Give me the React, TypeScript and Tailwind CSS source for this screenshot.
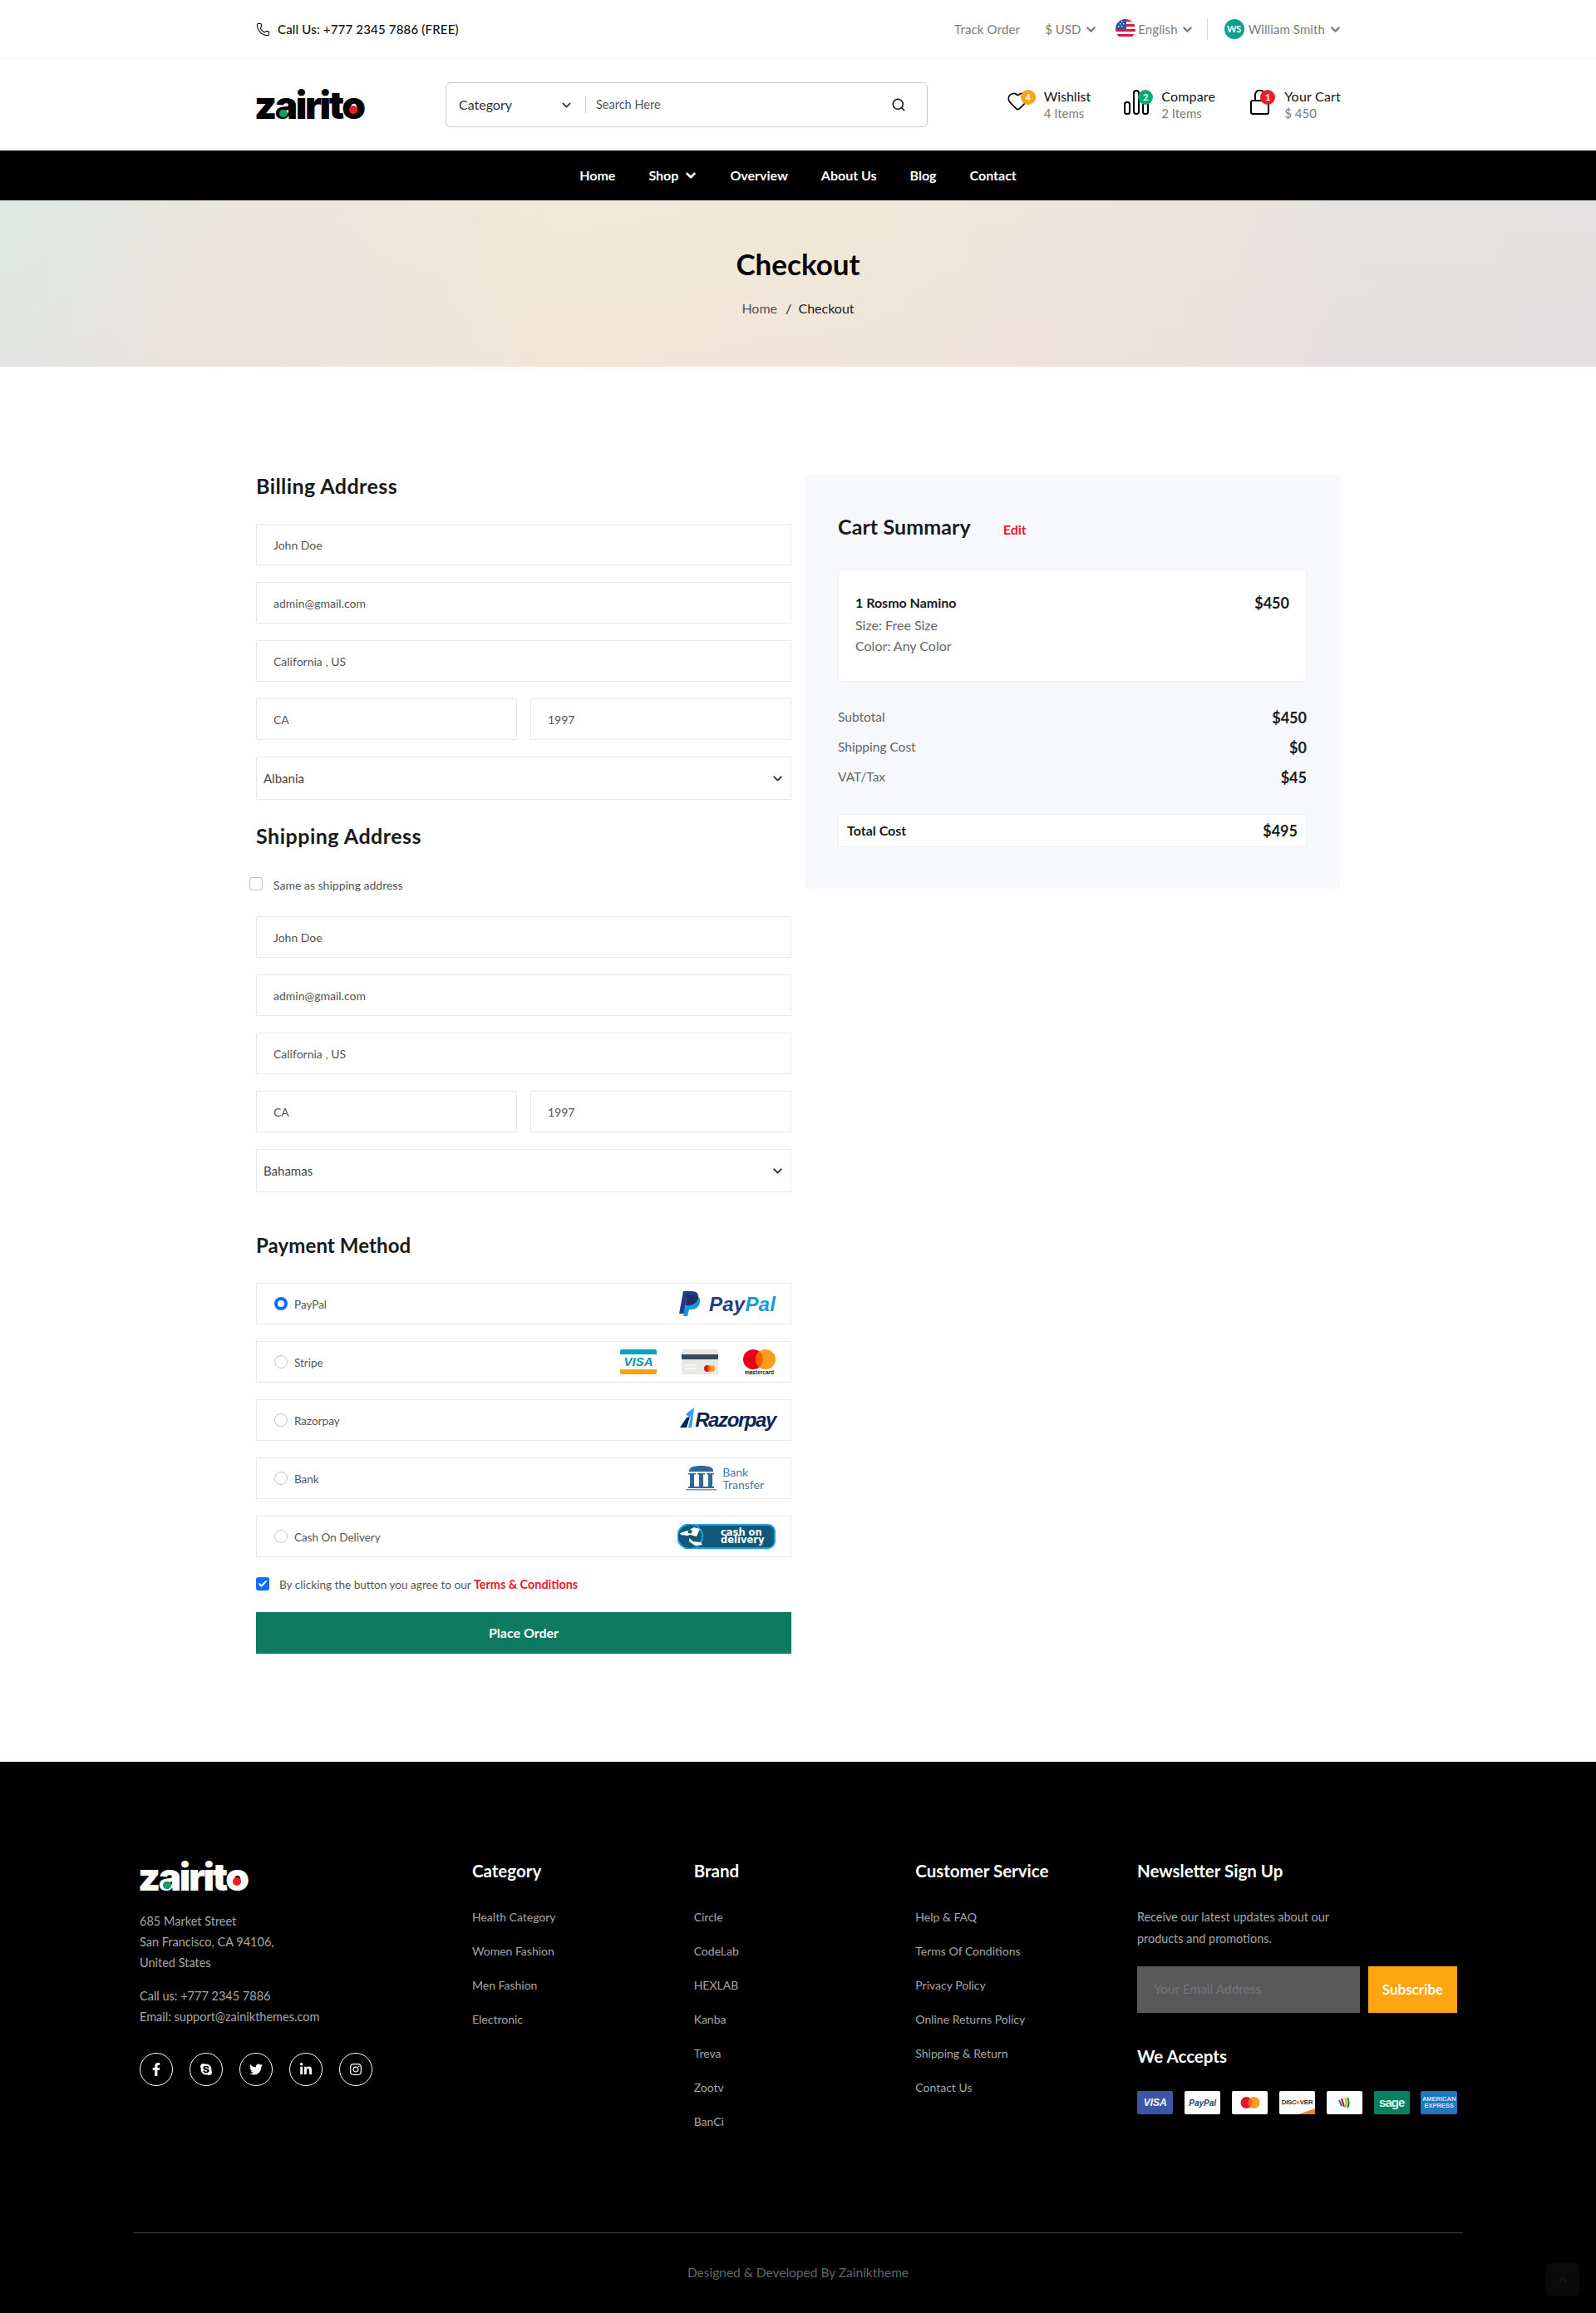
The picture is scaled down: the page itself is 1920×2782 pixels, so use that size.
import React from "react";
import { Phone, ChevronDown, Search, Heart, Check } from "lucide-react";
import { FaFacebookF, FaSkype, FaTwitter, FaLinkedinIn, FaInstagram } from "react-icons/fa";

function Logo({ white }: { white?: boolean }) {
  return (
    <div className={`relative -ml-[2px] h-[42px] w-[133px] leading-[42px] ${white ? "text-white" : "text-black"}`}>
      <span className="font-['Inter',sans-serif] text-[46px] font-black tracking-[-2.4px]">zairito</span>
      <span className="absolute left-[30px] top-[27px] h-[9px] w-[10px] rounded-full bg-[#0f9d6b]" />
      <span className="absolute left-[114px] top-[22px] h-[10px] w-[10px] rounded-full bg-[#ee1c25]" />
    </div>
  );
}

function Chev() {
  return <ChevronDown className="-mx-[1.5px]" size={17} strokeWidth={3} />;
}

function Flag() {
  return (
    <svg width="24" height="24" viewBox="0 0 24 24">
      <defs>
        <clipPath id="flagclip">
          <circle cx="12" cy="12" r="12" />
        </clipPath>
      </defs>
      <g clipPath="url(#flagclip)">
        <rect width="24" height="24" fill="#fff" />
        <rect y="0" width="24" height="3" fill="#e3173e" />
        <rect y="6" width="24" height="3" fill="#e3173e" />
        <rect y="12" width="24" height="3" fill="#e3173e" />
        <rect y="18" width="24" height="3" fill="#e3173e" />
        <rect width="13" height="12" fill="#2a52a8" />
        <g fill="#fff">
          <rect x="3" y="2" width="1.4" height="1.4" />
          <rect x="7" y="2" width="1.4" height="1.4" />
          <rect x="5" y="5" width="1.4" height="1.4" />
          <rect x="9" y="5" width="1.4" height="1.4" />
          <rect x="3" y="8" width="1.4" height="1.4" />
          <rect x="7" y="8" width="1.4" height="1.4" />
        </g>
      </g>
    </svg>
  );
}

function TopBar() {
  return (
    <div className="h-[71px] border-b border-[#eeeeee]">
      <div className="mx-auto flex h-[70px] w-[1304px] items-center justify-between">
        <div className="flex items-center gap-[9px] text-[15px] font-medium tracking-[0.18px] text-[#111]">
          <Phone size={17} strokeWidth={1.6} />
          <span>Call Us: +777 2345 7886 (FREE)</span>
        </div>
        <div className="-mr-px flex items-center text-[15px] text-[#7b7b7b]">
          <span className="mr-[30px] tracking-[0.15px]">Track Order</span>
          <span className="mr-[23px] flex items-center gap-[5px]">
            $ USD <Chev />
          </span>
          <span className="flex items-center gap-[3px]">
            <Flag />
            <span className="tracking-[0.1px]">English</span> <span className="ml-[2px] flex"><Chev /></span>
          </span>
          <span className="ml-[16px] mr-[20px] h-[26px] w-px bg-[#dddddd]" />
          <span className="flex items-center gap-[5px]">
            <span className="flex h-6 w-6 items-center justify-center rounded-full bg-[#0ea18a] text-[11px] font-bold text-white">WS</span>
            <span className="tracking-[0.1px]">William Smith</span> <Chev />
          </span>
        </div>
      </div>
    </div>
  );
}

function Badge({ n, color, left = "left-[17px]" }: { n: string; color: string; left?: string }) {
  return (
    <span className={`absolute ${left} top-0 flex h-[18px] w-[18px] items-center justify-center rounded-full text-[11px] font-bold text-white ${color}`}>{n}</span>
  );
}

function HeaderItem({ icon, title, sub, box, titleCls = "" }: { icon: React.ReactNode; title: string; sub: string; box: string; titleCls?: string }) {
  return (
    <div className="flex items-center">
      <div className={`relative -mt-[6px] h-[30px] ${box}`}>{icon}</div>
      <div>
        <div className={`text-[16px] leading-5 text-[#111] ${titleCls}`}>{title}</div>
        <div className="text-[15px] leading-5 text-[#7b7b7b]">{sub}</div>
      </div>
    </div>
  );
}

function MiddleHeader() {
  return (
    <div className="mx-auto flex h-[110px] w-[1304px] items-center justify-between">
      <Logo />
      <div className="ml-[97px] flex h-[54px] w-[580px] items-center rounded-md border border-[#c8c8c8] pl-[15px] pr-[25px]">
        <span className="w-[122px] text-[16px] text-[#333]">Category</span>
        <ChevronDown size={17} strokeWidth={2.4} className="-mx-[1.5px] text-[#333]" />
        <span className="ml-[16px] h-5 w-px bg-[#cccccc]" />
        <span className="ml-3 flex-1 text-[14.5px] text-[#555]">Search Here</span>
        <Search size={18} strokeWidth={2} className="text-[#111]" />
      </div>
      <div className="-mr-px ml-auto flex items-center gap-[38px]">
        <HeaderItem
          box="w-[45px]"
          title="Wishlist"
          sub="4 Items"
          icon={
            <>
              <Heart size={27} strokeWidth={1.4} className="text-black" />
              <Badge n="4" color="bg-[#fea510]" />
            </>
          }
        />
        <div className="ml-[2px]">
          <HeaderItem
            box="w-[45px]"
            title="Compare"
            titleCls="tracking-[0.2px]"
            sub="2 Items"
            icon={
              <>
                <svg width="30" height="30" viewBox="0 0 30 30" fill="none" stroke="#000" strokeWidth="2">
                  <rect x="1" y="15" width="6" height="14" rx="2.5" />
                  <rect x="12" y="1" width="6" height="28" rx="3" />
                  <rect x="23" y="8" width="6" height="21" rx="2.5" />
                </svg>
                <Badge n="2" color="bg-[#0ba876]" />
              </>
            }
          />
        </div>
        <div className="ml-[4px]">
          <HeaderItem
            box="w-[41px]"
            title="Your Cart"
            titleCls="tracking-[0.2px]"
            sub="$ 450"
            icon={
              <>
                <svg width="24" height="30" viewBox="0 0 24 30" fill="none" stroke="#000" strokeWidth="2">
                  <rect x="1" y="13" width="21" height="16" rx="2" />
                  <path d="M6 13V6a5 5 0 0 1 11 0v7" />
                </svg>
                <Badge n="1" color="bg-[#ee1c2e]" left="left-[12px]" />
              </>
            }
          />
        </div>
      </div>
    </div>
  );
}

function Nav() {
  return (
    <nav className="flex h-[60px] items-center justify-center gap-10 bg-black text-[16px] font-bold text-white">
      <span>Home</span>
      <span className="flex items-center gap-[6px]">
        Shop <ChevronDown size={18} strokeWidth={3.4} className="-mr-[2px]" />
      </span>
      <span>Overview</span>
      <span>About Us</span>
      <span>Blog</span>
      <span>Contact</span>
    </nav>
  );
}

function Hero() {
  return (
    <div className="flex h-[200px] flex-col items-center bg-[linear-gradient(to_bottom,rgba(255,255,255,0),rgba(236,205,215,0.12)),linear-gradient(97deg,#dfe8e4_0%,#e9e6e0_12%,#f2e9d8_35%,#f1e8da_55%,#eee4dd_70%,#e4e3e2_85%,#e4e2e2_100%)]">
      <h1 className="mt-[52px] text-[35px] font-bold leading-[48px] text-black">Checkout</h1>
      <div className="mt-[18px] flex gap-[10px] text-[16px] leading-6">
        <span className="text-[#555]">Home</span>
        <span className="text-[#222]">/&nbsp;&nbsp;Checkout</span>
      </div>
    </div>
  );
}

function Field({ ph }: { ph: string }) {
  return (
    <input
      placeholder={ph}
      className="h-[50px] w-full border border-[#e9e9e9] bg-white px-5 text-sm outline-none placeholder:text-[#555]"
    />
  );
}

function SelectBox({ value }: { value: string }) {
  return (
    <div className="relative">
      <select defaultValue={value} className="h-[52px] w-full appearance-none border border-[#e9e9e9] bg-white px-2 text-[15px] text-[#444] outline-none">
        <option>{value}</option>
      </select>
      <ChevronDown size={17} strokeWidth={2.8} className="pointer-events-none absolute right-[8px] top-[18px] text-[#333]" />
    </div>
  );
}

function AddressFields({ country }: { country: string }) {
  return (
    <div className="flex flex-col gap-5">
      <Field ph="John Doe" />
      <Field ph="admin@gmail.com" />
      <Field ph="California , US" />
      <div className="grid grid-cols-2 gap-4">
        <Field ph="CA" />
        <Field ph="1997" />
      </div>
      <SelectBox value={country} />
    </div>
  );
}

function PayPalLogo() {
  return (
    <div className="flex h-[30px] items-center gap-[10px]">
      <svg width="26" height="30" viewBox="0 0 26 30">
        <path d="M5 0h10c6 0 9 3 8 8-1 6-5 9-11 9H8L6 27H0z" fill="#253b80" />
        <path d="M9 5h9c5 0 8 3 7 8-1 6-5 9-10 9h-3l-2 8H5z" fill="#179bd7" />
        <path d="M9 5h9c2 0 4 .5 5 1.6C23 12 19 17 12 17H8z" fill="#222d65" />
      </svg>
      <span className="mt-[2px] font-['Liberation_Sans',sans-serif] text-[24px] font-bold italic leading-none tracking-[0.2px]">
        <span className="text-[#253b80]">Pay</span>
        <span className="text-[#179bd7]">Pal</span>
      </span>
    </div>
  );
}

function CardIcons() {
  return (
    <div className="flex h-[30px] items-center gap-[30px]">
      <div className="relative flex h-[30px] w-[44px] flex-col overflow-hidden rounded-[2px] bg-white">
        <span className="h-[6px] bg-[#0ca0c4]" />
        <span className="flex-1 text-center font-['Liberation_Sans',sans-serif] text-[15px] font-bold italic leading-[17px] text-[#0f93ad]">VISA</span>
        <span className="h-[6px] bg-[#f9a01b]" />
      </div>
      <svg width="44" height="30" viewBox="0 0 44 30">
        <rect width="44" height="30" rx="2" fill="#e9e9e4" />
        <rect y="6" width="44" height="6" fill="#34495e" />
        <rect x="4" y="18" width="14" height="2" fill="#f6f6f3" />
        <rect x="4" y="22" width="14" height="2" fill="#f6f6f3" />
        <circle cx="31" cy="23" r="4" fill="#e8112d" />
        <circle cx="36" cy="23" r="4" fill="#f79e1b" />
        <path d="M33.5 19.9a4 4 0 0 1 0 6.2 4 4 0 0 1 0-6.2z" fill="#ff5f00" />
      </svg>
      <div className="flex w-[39px] flex-col items-center">
        <svg width="39" height="24" viewBox="0 0 39 24">
          <circle cx="12" cy="12" r="12" fill="#eb001b" />
          <circle cx="27" cy="12" r="12" fill="#f79e1b" />
          <path d="M19.5 2.6a12 12 0 0 1 0 18.8 12 12 0 0 1 0-18.8z" fill="#ff5f00" />
        </svg>
        <span className="font-['Liberation_Sans',sans-serif] text-[6.5px] font-bold leading-[7px] text-[#222]">mastercard</span>
      </div>
    </div>
  );
}

function RazorpayLogo() {
  return (
    <div className="flex h-[30px] items-center">
      <svg width="18" height="30" viewBox="0 0 18 30">
        <path d="M0 24 8 12l4-1-4 13z" fill="#072654" />
        <path d="M17 0 15 3l-5 21h4z" fill="#3395ff" />
        <path d="M7 8l10-8-5 12z" fill="#3395ff" />
      </svg>
      <span className="font-['Liberation_Sans',sans-serif] text-[24px] font-bold italic leading-none tracking-[-1.4px] text-[#072654]">Razorpay</span>
    </div>
  );
}

function BankLogo() {
  return (
    <div className="mr-[14px] flex h-[30px] items-center gap-[7px]">
      <svg width="37" height="30" viewBox="0 0 37 30" fill="#336699">
        <path d="M4 6c0-4 5-6 14.500-6S33 2 33 6v1H4z" />
        <rect x="5" y="10" width="5" height="15" />
        <rect x="16" y="10" width="5" height="15" />
        <rect x="27" y="10" width="5" height="15" />
        <rect x="3" y="9" width="9" height="1.500" />
        <rect x="14" y="9" width="9" height="1.500" />
        <rect x="25" y="9" width="9" height="1.500" />
        <rect x="3" y="25" width="31" height="2" />
        <rect x="0" y="28" width="37" height="1.500" fill="#6f96bf" />
      </svg>
      <div className="text-[14px] leading-[15px] text-[#4a76a8]">
        <div>Bank</div>
        <div>Transfer</div>
      </div>
    </div>
  );
}

function CodLogo() {
  return (
    <div className="relative flex h-[30px] w-[118px] items-center rounded-l-[15px] rounded-r-[9px] border-2 border-[#1ca4dc] bg-[#12587a]">
      <svg width="44" height="30" viewBox="0 0 44 30" className="absolute left-[-2px] top-[-2px]">
        <circle cx="15" cy="15" r="14" fill="#12587a" />
        <circle cx="15" cy="15" r="15" fill="none" stroke="#1ca4dc" strokeWidth="2" />
        <path d="M3 11l9-3 8-4 7 2-4 9-8-2-3 1-8-1z" fill="#fff" />
        <circle cx="15" cy="9" r="2.500" fill="#12587a" />
        <path d="M14 17l5 4 9 1 2 3-9 1-7-5z" fill="#fff" />
      </svg>
      <div className="ml-[50px] font-['DejaVu_Sans',sans-serif] text-[11.5px] font-bold leading-[9px] text-white">
        <div>cash on</div>
        <div>delivery</div>
      </div>
    </div>
  );
}

const payments: { name: string; logo: React.ReactNode; on?: boolean }[] = [
  { name: "PayPal", logo: <PayPalLogo />, on: true },
  { name: "Stripe", logo: <CardIcons /> },
  { name: "Razorpay", logo: <RazorpayLogo /> },
  { name: "Bank", logo: <BankLogo /> },
  { name: "Cash On Delivery", logo: <CodLogo /> },
];

function PaymentRow({ name, logo, on }: { name: string; logo: React.ReactNode; on?: boolean }) {
  return (
    <label className="flex h-[50px] items-center border border-[#e9e9e9] pl-[21px] pr-[18px]">
      <span className={`h-4 w-4 rounded-full ${on ? "border-[4px] border-[#0d6efd]" : "border border-[#c4c4c4]"}`} />
      <span className="ml-2 mt-[2px] flex-1 text-[13.5px] text-[#555]">{name}</span>
      {logo}
    </label>
  );
}

function BillingColumn() {
  const h = "font-bold text-[#1a1a1a]";
  return (
    <div className="w-[644px]">
      <h2 className={`${h} mb-[33px] text-[25px] leading-[26px] tracking-[0.43px]`}>Billing Address</h2>
      <AddressFields country="Albania" />
      <h2 className={`${h} mb-[37px] mt-[30px] text-[25px] leading-[26px] tracking-[0.5px]`}>Shipping Address</h2>
      <label className="-ml-2 mb-[31px] flex h-4 items-center">
        <span className="h-4 w-4 rounded-[3px] border border-[#bdbdbd]" />
        <span className="ml-[13px] mt-[2px] text-[14px] text-[#555]">Same as shipping address</span>
      </label>
      <AddressFields country="Bahamas" />
      <h2 className={`${h} mb-[31px] mt-[50px] text-[24px] leading-7 tracking-[0.1px]`}>Payment Method</h2>
      <div className="flex flex-col gap-5">
        {payments.map((p) => (
          <PaymentRow key={p.name} name={p.name} logo={p.logo} on={p.on} />
        ))}
      </div>
      <label className="mt-6 flex h-4 items-center">
        <span className="flex h-4 w-4 items-center justify-center rounded-[3px] bg-[#0d6efd] text-white">
          <Check size={12} strokeWidth={4} />
        </span>
        <span className="ml-[12px] mt-[2px] text-[13.6px] text-[#555]">
          By clicking the button you agree to our <span className="text-[14.4px] font-bold text-[#f0142f]">Terms &amp; Conditions</span>
        </span>
      </label>
      <button className="mt-[26px] h-[50px] w-full bg-[#0e7a5f] text-[16px] font-bold text-white">Place Order</button>
    </div>
  );
}

function SummaryRow({ label, value }: { label: string; value: string }) {
  return (
    <div className="flex h-6 items-center justify-between">
      <span className="text-[15.5px] text-[#666]">{label}</span>
      <span className="text-[18px] font-bold text-[#1a1a1a]">{value}</span>
    </div>
  );
}

function CartSummary() {
  return (
    <aside className="h-[498px] w-[644px] bg-[#f7f8fc] px-10 pt-[49px]">
      <div className="flex h-7 items-center">
        <h2 className="text-[25px] font-bold tracking-[0.1px] text-[#1a1a1a]">Cart Summary</h2>
        <span className="ml-[39px] mt-[6px] text-[16px] font-bold text-[#f0142f]">Edit</span>
      </div>
      <div className="mt-[37px] flex h-[135px] justify-between border border-[#eeeeee] bg-white px-5 pt-[27px]">
        <div>
          <div className="text-[16px] font-bold leading-6 text-[#1a1a1a]">1 Rosmo Namino</div>
          <div className="mt-[2px] text-[16px] leading-[25px] text-[#666]">Size: Free Size</div>
          <div className="text-[16px] leading-[25px] text-[#666]">Color: Any Color</div>
        </div>
        <span className="text-[18px] font-bold leading-6 text-[#1a1a1a]">$450</span>
      </div>
      <div className="mt-[31px] flex flex-col gap-3">
        <SummaryRow label="Subtotal" value="$450" />
        <SummaryRow label="Shipping Cost" value="$0" />
        <SummaryRow label="VAT/Tax" value="$45" />
      </div>
      <div className="mt-8 flex h-10 items-center justify-between border border-[#eeeeee] bg-white px-[10px] text-[16px] font-bold text-[#1a1a1a]">
        <span>Total Cost</span>
        <span className="text-[18px]">$495</span>
      </div>
    </aside>
  );
}

function FooterHeading({ children, className = "" }: { children: React.ReactNode; className?: string }) {
  return <h3 className={`text-[20.5px] font-bold leading-7 text-white ${className}`}>{children}</h3>;
}

function FooterLinks({ title, items }: { title: string; items: string[] }) {
  return (
    <div>
      <FooterHeading>{title}</FooterHeading>
      <ul className="mt-[30px] flex flex-col gap-[17px]">
        {items.map((i) => (
          <li key={i} className="text-sm leading-6 text-[#a6a6a6]">{i}</li>
        ))}
      </ul>
    </div>
  );
}

function PayCard({ className, children }: { className: string; children: React.ReactNode }) {
  return <div className={`flex h-7 w-[43.5px] items-center justify-center overflow-hidden rounded-[2px] ${className}`}>{children}</div>;
}

function AcceptCards() {
  return (
    <div className="mt-7 flex w-[385px] justify-between font-['Liberation_Sans',sans-serif]">
      <PayCard className="bg-[#3c55a5]">
        <span className="text-[12px] font-bold italic text-white">VISA</span>
      </PayCard>
      <PayCard className="bg-white">
        <span className="text-[10px] font-bold italic text-[#253b80]">PayPal</span>
      </PayCard>
      <PayCard className="bg-white">
        <svg width="24" height="14" viewBox="0 0 24 14">
          <circle cx="7.500" cy="7" r="7" fill="#e8112d" />
          <circle cx="16.500" cy="7" r="7" fill="#f79e1b" />
          <path d="M12 1.700a7 7 0 0 1 0 10.600 7 7 0 0 1 0-10.600z" fill="#f2602a" />
        </svg>
      </PayCard>
      <PayCard className="relative bg-white">
        <span className="text-[8px] font-bold tracking-[-0.4px] text-[#333]">DISC<span className="text-[#f58220]">●</span>VER</span>
        <span className="absolute bottom-0 right-0 h-0 w-0 border-b-[7px] border-l-[20px] border-b-[#f58220] border-l-transparent" />
      </PayCard>
      <PayCard className="bg-white">
        <svg width="14" height="14" viewBox="0 0 14 14" fill="none" strokeWidth="2.200">
          <path d="M1 4l3 7" stroke="#3369e8" />
          <path d="M4 2l3 10" stroke="#d50f25" />
          <path d="M8 1c1.500 3 2 8 0 12" stroke="#eeb211" />
          <path d="M11 1c2 3 2 9 0 12" stroke="#009925" />
        </svg>
      </PayCard>
      <PayCard className="bg-[#0a7f62]">
        <span className="text-[15px] font-bold tracking-[-0.9px] text-[#d9efe8]">sage</span>
      </PayCard>
      <PayCard className="flex-col bg-[#2277bb]">
        <span className="whitespace-nowrap text-[7.500px] font-bold leading-[8px] text-[#cfe4f5]">AMERICAN</span>
        <span className="whitespace-nowrap text-[7.500px] font-bold leading-[8px] text-[#cfe4f5]">EXPRESS</span>
      </PayCard>
    </div>
  );
}

const socials = [FaFacebookF, FaSkype, FaTwitter, FaLinkedinIn, FaInstagram];

function Footer() {
  return (
    <footer className="bg-black pb-[37px] pt-[117px]">
      <div className="mx-auto w-[1600px]">
        <div className="grid grid-cols-[400px_266.67px_266.67px_266.67px_385px] px-2">
          <div>
            <Logo white />
            <div className="mt-5 text-[14.5px] leading-[25px] text-[#a8a8a8]">
              <div>685 Market Street</div>
              <div>San Francisco, CA 94106,</div>
              <div>United States</div>
            </div>
            <div className="mt-[15px] text-[14.5px] leading-[25px] text-[#a8a8a8]">
              <div>Call us: +777 2345 7886</div>
              <div>Email: support@zainikthemes.com</div>
            </div>
            <div className="mt-[31px] flex gap-5">
              {socials.map((Icon, i) => (
                <span key={i} className="flex h-10 w-10 items-center justify-center rounded-full border border-white text-white">
                  <Icon size={16} />
                </span>
              ))}
            </div>
          </div>
          <FooterLinks title="Category" items={["Health Category", "Women Fashion", "Men Fashion", "Electronic"]} />
          <FooterLinks title="Brand" items={["Circle", "CodeLab", "HEXLAB", "Kanba", "Treva", "Zootv", "BanCi"]} />
          <FooterLinks title="Customer Service" items={["Help & FAQ", "Terms Of Conditions", "Privacy Policy", "Online Returns Policy", "Shipping & Return", "Contact Us"]} />
          <div>
            <FooterHeading>Newsletter Sign Up</FooterHeading>
            <p className="mt-[29px] w-[260px] text-[14.4px] leading-[26px] text-[#a6a6a6]">Receive our latest updates about our products and promotions.</p>
            <div className="mt-5 flex h-14 gap-[10px]">
              <input placeholder="Your Email Address" className="w-[268px] bg-[#595959] px-5 text-[15.5px] outline-none placeholder:text-[#6f7680]" />
              <button className="w-[107px] bg-[#fea510] text-[17px] font-bold text-white">Subscribe</button>
            </div>
            <FooterHeading className="mt-[38px]">We Accepts</FooterHeading>
            <AcceptCards />
          </div>
        </div>
        <div className="mt-[121px] border-t border-[#3d3d3d] pt-[35px] text-center text-[15.5px] leading-6 text-[#666]">Designed &amp; Developed By Zainiktheme</div>
      </div>
    </footer>
  );
}

export default function App() {
  return (
    <div className="relative font-['Lato','Noto_Sans',sans-serif]">
      <TopBar />
      <MiddleHeader />
      <Nav />
      <Hero />
      <main className="mx-auto flex w-[1304px] gap-4 py-[130px]">
        <BillingColumn />
        <CartSummary />
      </main>
      <Footer />
      <button className="absolute bottom-5 right-5 flex h-10 w-10 items-center justify-center rounded-md bg-[#0a0a0a] text-[#1c1012]">
        <ChevronDown size={16} strokeWidth={3} className="rotate-180" />
      </button>
    </div>
  );
}
